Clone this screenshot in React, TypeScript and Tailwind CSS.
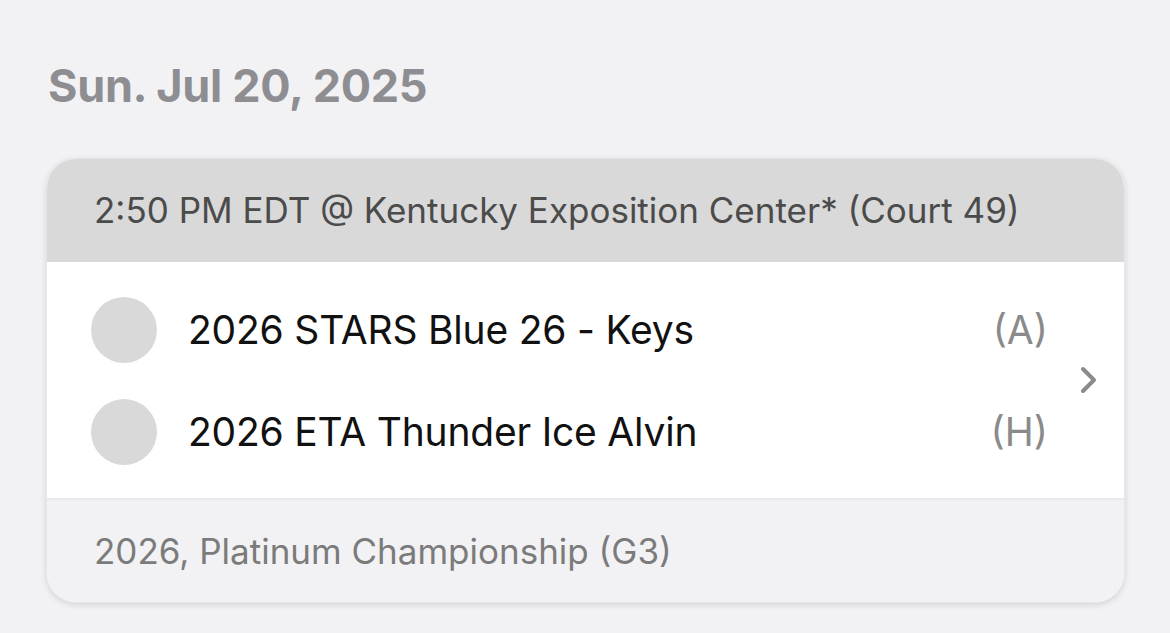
import React from "react";

const font = { fontFamily: "Inter, 'Noto Sans', sans-serif" };

function Team({ name, tag }: { name: string; tag: string }) {
  return (
    <div className="flex items-center h-[102px]">
      <div className="w-[66px] h-[66px] rounded-full bg-[#d9d9d9] shrink-0" />
      <div className="ml-[31px] text-[39px] text-[#111111] flex-1 tracking-[-0.2px]">{name}</div>
      <div className="text-[39px] text-[#8a8a8a] w-[80px] text-right">{tag}</div>
    </div>
  );
}

export default function App() {
  return (
    <div className="w-[1170px] h-[633px] bg-[#f2f2f4] overflow-hidden" style={font}>
      <div className="pt-[56px] pl-[48px] text-[45px] font-bold text-[#8e8e92] leading-[60px] tracking-[-0.3px]">
        Sun. Jul 20, 2025
      </div>
      <div className="mt-[42px] ml-[46px] w-[1079px] rounded-[30px] overflow-hidden bg-white shadow-[0_2px_6px_rgba(0,0,0,0.12)] border border-[#e6e6e8]">
        <div className="h-[103px] bg-[#d9d9d9] flex items-center pl-[47px] text-[35px] text-[#4b4b4b]">
          2:50 PM EDT @ Kentucky Exposition Center* (Court 49)
        </div>
        <div className="flex items-center pl-[44px] pr-[26px] h-[236px] bg-white">
          <div className="flex-1 pt-[2px]">
            <Team name="2026 STARS Blue 26 - Keys" tag="(A)" />
            <Team name="2026 ETA Thunder Ice Alvin" tag="(H)" />
          </div>
          <svg className="ml-[32px]" width="18" height="28" viewBox="0 0 18 28" fill="none">
            <path d="M3 3 L14 14 L3 25" stroke="#8a8a8a" strokeWidth="4" strokeLinecap="round" strokeLinejoin="round" />
          </svg>
        </div>
        <div className="h-[104px] bg-[#f2f2f4] border-t-2 border-[#e9e9eb] flex items-center pl-[47px] text-[35px] text-[#7b7b7b]">
          2026, Platinum Championship (G3)
        </div>
      </div>
    </div>
  );
}
